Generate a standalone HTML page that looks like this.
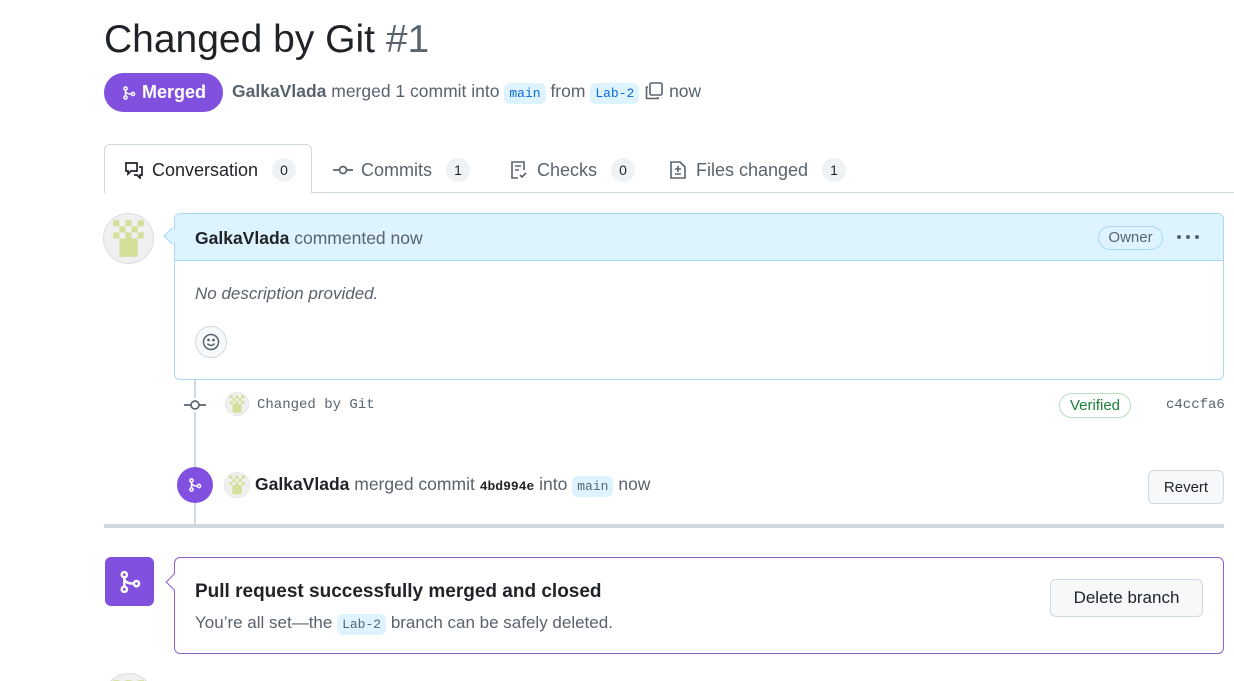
<!DOCTYPE html>
<html style="width:1234px;height:681px;overflow:hidden"><head><meta charset="utf-8"><style>
*{box-sizing:border-box;margin:0;padding:0}
body{width:1234px;height:681px;overflow:hidden;background:#fff;font-family:"Liberation Sans",sans-serif;color:#1f2328;position:relative}
.a{position:absolute}
.mono{font-family:"Liberation Mono",monospace}
.code{background:#ddf4ff;color:#0969da;border-radius:6px;padding:3px 5px;font-size:13px;font-family:"Liberation Mono",monospace}
.cnt{display:inline-block;background:#eff2f5;border-radius:12px;min-width:24px;height:24px;line-height:24px;text-align:center;font-size:14px;color:#1f2328;margin-left:6px}
.tab{position:absolute;top:158px;font-size:18px;color:#59636e;display:flex;align-items:center;gap:8px}
.btn{position:absolute;background:#f6f8fa;border:1px solid #d1d9e0;border-radius:6px;font-size:16px;color:#1f2328;display:flex;align-items:center;justify-content:center}
</style></head><body>
<svg width="0" height="0" style="position:absolute"><defs>
<symbol id="av" viewBox="0 0 50 50"><circle cx="25" cy="25" r="24.5" fill="#f0f0f0" stroke="#ddd"/><g fill="#d2e09a"><rect x="10" y="7" width="6" height="6"/><rect x="22" y="7" width="6" height="6"/><rect x="34" y="7" width="6" height="6"/><rect x="16" y="13" width="6" height="6"/><rect x="28" y="13" width="6" height="6"/><rect x="10" y="19" width="6" height="6"/><rect x="22" y="19" width="6" height="6"/><rect x="34" y="19" width="6" height="6"/><rect x="16" y="25" width="18" height="18"/></g></symbol>
<symbol id="mg" viewBox="0 0 16 16"><g fill="none" stroke="currentColor" stroke-width="1.5"><circle cx="4.5" cy="3.5" r="1.6"/><circle cx="4.5" cy="12.5" r="1.6"/><circle cx="12" cy="9" r="1.6"/><path d="M4.5 5.1v5.8M4.5 5.5c0 2.5 2 3.5 5.8 3.5"/></g></symbol>
</defs></svg>

<div class="a" style="left:104px;top:17px;font-size:39px;line-height:46px">Changed by Git <span style="color:#59636e">#1</span></div>

<div class="a" style="left:104px;top:73px;width:119px;height:39px;background:#8250df;border-radius:20px;color:#fff;font-size:18px;font-weight:bold;display:flex;align-items:center;justify-content:center;gap:5px"><svg width="16" height="16" style="color:#fff"><use href="#mg"/></svg>Merged</div>
<div class="a" style="left:232px;top:81px;font-size:17.5px;color:#59636e;white-space:nowrap"><b style="color:#59636e">GalkaVlada</b> merged 1 commit into <span class="code">main</span> from <span class="code">Lab-2</span> <svg width="20" height="20" style="vertical-align:-4px" fill="none" stroke="#59636e" stroke-width="1.6"><rect x="6" y="2" width="12" height="12" rx="1.5"/><path d="M4 6H2.5v11.5H14V16"/></svg> now</div>

<div class="a" style="left:104px;top:144px;width:208px;height:49px;border:1px solid #d1d9e0;border-bottom:none;border-radius:6px 6px 0 0;background:#fff;z-index:2"></div>
<div class="a" style="left:311px;top:192px;width:923px;height:1px;background:#d1d9e0"></div>
<div class="tab" style="left:124px;color:#1f2328;z-index:3"><svg width="20" height="18" fill="none" stroke="#1f2328" stroke-width="1.7"><path d="M2 2h11v8H7l-3 3v-3H2z"/><path d="M15 6h3v8h-2v3l-3-3h-3"/></svg>Conversation <span class="cnt">0</span></div>
<div class="tab" style="left:333px"><svg width="20" height="14" fill="none" stroke="#59636e" stroke-width="1.7"><circle cx="10" cy="7" r="3.5"/><path d="M0 7h6.5M13.5 7H20"/></svg>Commits <span class="cnt">1</span></div>
<div class="tab" style="left:509px"><svg width="20" height="20" fill="none" stroke="#59636e" stroke-width="1.6"><path d="M9 18H3V2h12v8"/><path d="M6 6h6M6 10h4M11 15l2 2 4-4"/></svg>Checks <span class="cnt">0</span></div>
<div class="tab" style="left:668px"><svg width="20" height="20" fill="none" stroke="#59636e" stroke-width="1.6"><path d="M3 2h9l5 5v11H3z"/><path d="M10 6v6M7 9h6M7 14h6"/></svg>Files changed <span class="cnt">1</span></div>

<svg class="a" style="left:103px;top:213px" width="51" height="51"><use href="#av"/></svg>
<div class="a" style="left:174px;top:213px;width:1050px;height:167px;border:1px solid #a8d8f3;border-radius:6px;overflow:hidden">
  <div style="height:47px;background:#ddf4ff;border-bottom:1px solid #a8d8f3;padding:14px 0 0 20px;font-size:17.5px;color:#59636e"><b style="color:#1f2328">GalkaVlada</b> commented now</div>
  <div style="padding:23px 0 0 20px;font-size:17px;font-style:italic;color:#59636e">No description provided.</div>
</div>
<div class="a" style="left:166px;top:230px;width:12px;height:12px;background:#ddf4ff;border-left:1px solid #a8d8f3;border-bottom:1px solid #a8d8f3;transform:rotate(45deg)"></div>
<div class="a" style="left:1098px;top:226px;width:65px;height:24px;border:1px solid #a8d8f3;border-radius:12px;font-size:15px;color:#59636e;text-align:center;line-height:22px">Owner</div>
<svg class="a" style="left:1176px;top:234px" width="24" height="6" fill="#59636e"><circle cx="3" cy="3" r="2"/><circle cx="12" cy="3" r="2"/><circle cx="21" cy="3" r="2"/></svg>
<div class="a" style="left:195px;top:326px;width:32px;height:32px;border:1px solid #d1d9e0;border-radius:50%;background:#f6f8fa;display:flex;align-items:center;justify-content:center"><svg width="18" height="18" fill="none" stroke="#59636e" stroke-width="1.5"><circle cx="9" cy="9" r="7.5"/><circle cx="6.5" cy="7" r=".6" fill="#59636e"/><circle cx="11.5" cy="7" r=".6" fill="#59636e"/><path d="M5.5 10.5c1.5 2.5 5.5 2.5 7 0"/></svg></div>

<div class="a" style="left:194px;top:380px;width:2px;height:145px;background:#d1d9e0"></div>
<svg class="a" style="left:184px;top:398px;background:#fff" width="22" height="14" fill="none" stroke="#59636e" stroke-width="1.7"><circle cx="11" cy="7" r="4"/><path d="M0 7h7M15 7h7"/></svg>
<svg class="a" style="left:225px;top:392px" width="24" height="24"><use href="#av"/></svg>
<div class="a mono" style="left:257px;top:397px;font-size:14px;color:#59636e">Changed by Git</div>
<div class="a" style="left:1059px;top:393px;width:72px;height:25px;border:1px solid #b7dfc0;border-radius:13px;color:#1a7f37;font-size:15px;text-align:center;line-height:23px">Verified</div>
<div class="a mono" style="left:1166px;top:397px;font-size:14px;color:#59636e">c4ccfa6</div>

<div class="a" style="left:177px;top:467px;width:36px;height:36px;border-radius:50%;background:#8250df;display:flex;align-items:center;justify-content:center"><svg width="16" height="16" style="color:#fff"><use href="#mg"/></svg></div>
<svg class="a" style="left:224px;top:472px" width="26" height="26"><use href="#av"/></svg>
<div class="a" style="left:255px;top:474px;font-size:17.5px;color:#59636e;white-space:nowrap"><b style="color:#1f2328">GalkaVlada</b> merged commit <b class="mono" style="font-size:13px;color:#1f2328">4bd994e</b> into <span class="code" style="color:#59636e">main</span> now</div>
<div class="btn" style="left:1148px;top:470px;width:76px;height:34px;font-size:15px">Revert</div>

<div class="a" style="left:104px;top:524px;width:1120px;height:4px;background:#d1d9e0"></div>

<div class="a" style="left:105px;top:557px;width:49px;height:49px;border-radius:6px;background:#8250df;display:flex;align-items:center;justify-content:center"><svg width="26" height="26" style="color:#fff"><use href="#mg"/></svg></div>
<div class="a" style="left:174px;top:557px;width:1050px;height:97px;border:1px solid #8a63d2;border-radius:6px"></div>
<div class="a" style="left:168px;top:576px;width:12px;height:12px;background:#fff;border-left:1px solid #8a63d2;border-bottom:1px solid #8a63d2;transform:rotate(45deg)"></div>
<div class="a" style="left:195px;top:581px;font-size:19px;font-weight:bold;color:#1f2328">Pull request successfully merged and closed</div>
<div class="a" style="left:195px;top:613px;font-size:17px;color:#59636e;white-space:nowrap">You’re all set—the <span class="code" style="color:#59636e">Lab-2</span> branch can be safely deleted.</div>
<div class="btn" style="left:1050px;top:579px;width:153px;height:38px;font-size:17px">Delete branch</div>

<div class="a" style="left:103px;top:673px;width:51px;height:8px;overflow:hidden"><svg width="51" height="51"><use href="#av"/></svg></div>
</body></html>
